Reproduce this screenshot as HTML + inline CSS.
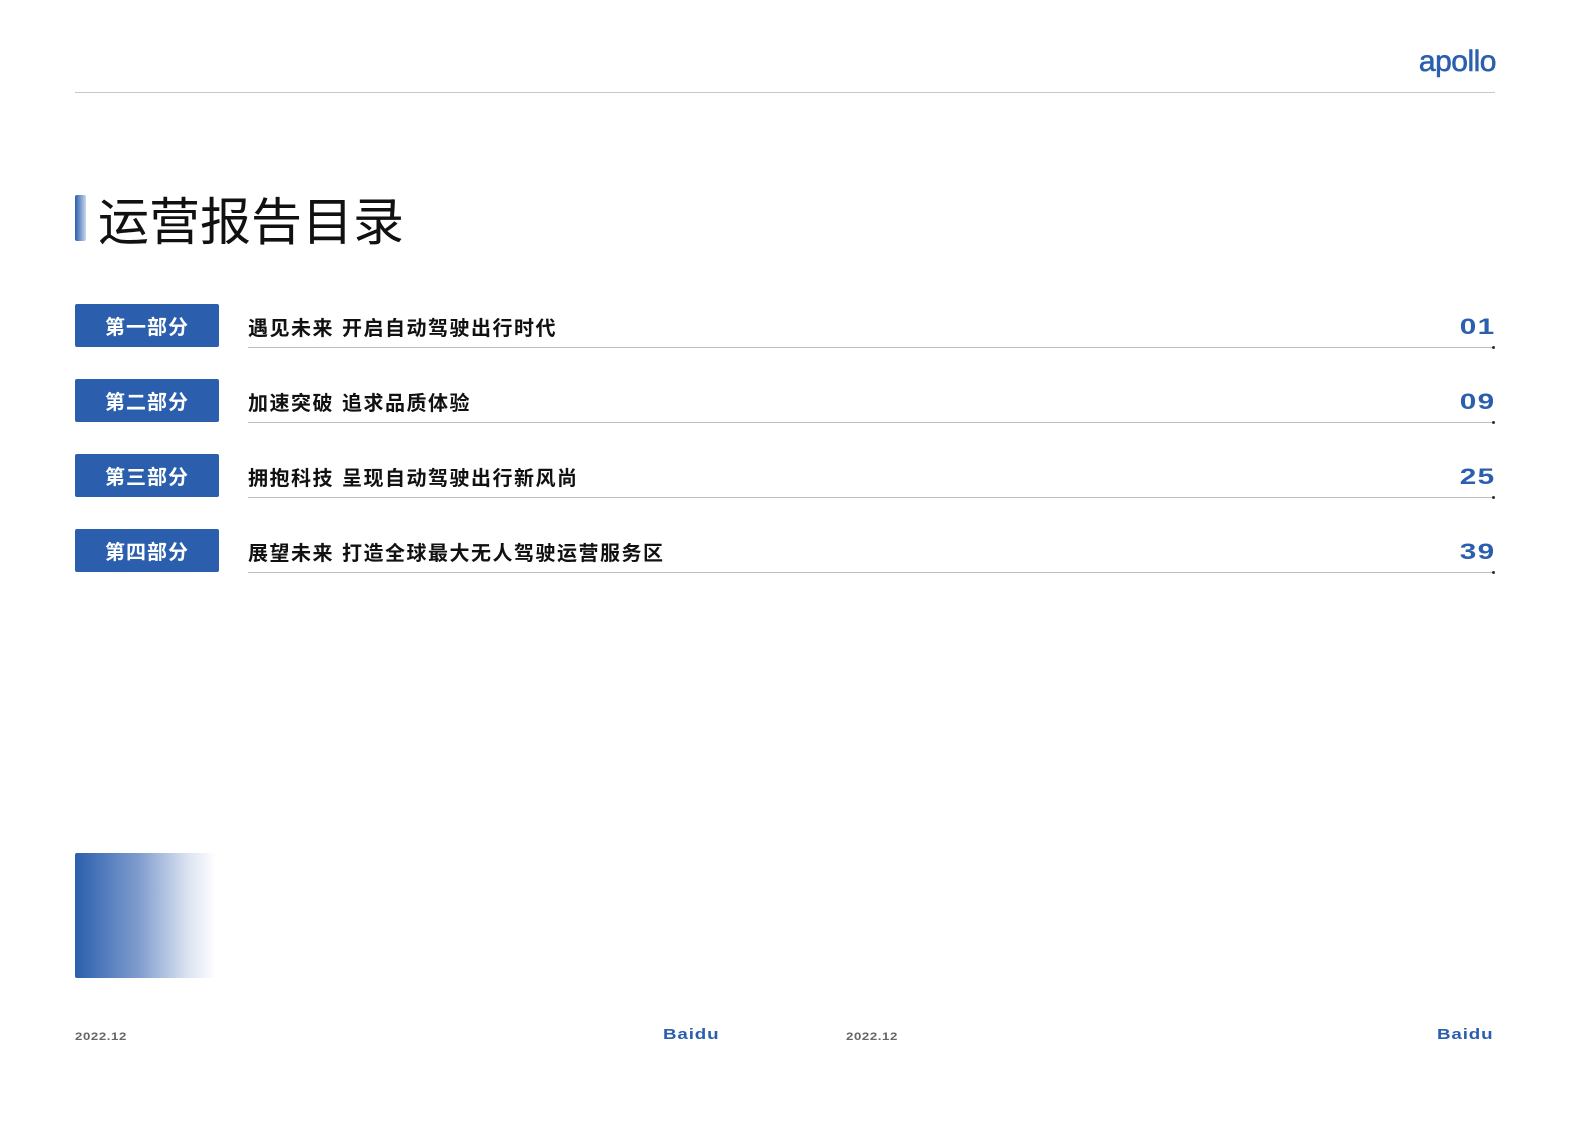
<!DOCTYPE html>
<html><head><meta charset="utf-8"><style>
html,body{margin:0;padding:0;background:#fff;}
body{width:1587px;height:1129px;position:relative;overflow:hidden;font-family:"Liberation Sans","Noto Sans CJK SC",sans-serif;}
.abs{position:absolute;}
.logo{left:1400px;top:42px;width:96px;text-align:right;font-size:30px;color:#2b5fad;font-weight:normal;line-height:40px;letter-spacing:-0.5px;-webkit-text-stroke:0.6px #2b5fad;}
.topline{left:75px;top:92px;width:1420px;height:1px;background:#c8c8c8;}
.bar{left:75px;top:195px;width:11px;height:46px;border-radius:2px;background:linear-gradient(90deg,#2b5fad,#c9d6ec);}
.title{left:98px;top:188px;font-size:51px;line-height:60px;color:#111;font-family:"Noto Sans CJK SC",sans-serif;font-weight:400;}
.box{left:75px;width:144px;height:43px;background:#2b5fad;border-radius:2px;color:#fff;font-size:20px;font-weight:bold;text-align:center;line-height:43px;font-family:"Noto Sans CJK SC",sans-serif;letter-spacing:1px;}
.txt{left:248px;font-size:20px;font-weight:bold;color:#111;line-height:43px;font-family:"Noto Sans CJK SC",sans-serif;letter-spacing:1.5px;word-spacing:2px;}
.num{right:92px;font-size:22px;font-weight:bold;color:#2b5fad;line-height:43px;letter-spacing:1px;transform:scaleX(1.35);transform-origin:right;}
.line{left:248px;width:1247px;height:1px;background:#bdbdbd;}
.dot{left:1492px;width:3px;height:3px;background:#333;border-radius:50%;}
.grad{left:75px;top:853px;width:141px;height:125px;background:linear-gradient(90deg,#2b5fad 0%,#7f9cce 45%,#dbe3f1 80%,#fff 100%);border-radius:2px;}
.date{font-size:11px;color:#666;font-weight:bold;top:1031px;letter-spacing:0.5px;transform:scaleX(1.2);transform-origin:left;}
.baidu{font-size:15px;color:#2b5fad;font-weight:bold;top:1026px;letter-spacing:0.7px;transform:scaleX(1.25);transform-origin:left;}
</style></head><body>
<div class="abs logo">apollo</div>
<div class="abs topline"></div>
<div class="abs bar"></div>
<div class="abs title">运营报告目录</div>

<div class="abs box" style="top:304px">第一部分</div>
<div class="abs txt" style="top:305px">遇见未来 开启自动驾驶出行时代</div>
<div class="abs num" style="top:305px">01</div>
<div class="abs line" style="top:347px"></div>
<div class="abs dot" style="top:346px"></div>

<div class="abs box" style="top:379px">第二部分</div>
<div class="abs txt" style="top:380px">加速突破 追求品质体验</div>
<div class="abs num" style="top:380px">09</div>
<div class="abs line" style="top:422px"></div>
<div class="abs dot" style="top:421px"></div>

<div class="abs box" style="top:454px">第三部分</div>
<div class="abs txt" style="top:455px">拥抱科技 呈现自动驾驶出行新风尚</div>
<div class="abs num" style="top:455px">25</div>
<div class="abs line" style="top:497px"></div>
<div class="abs dot" style="top:496px"></div>

<div class="abs box" style="top:529px">第四部分</div>
<div class="abs txt" style="top:530px">展望未来 打造全球最大无人驾驶运营服务区</div>
<div class="abs num" style="top:530px">39</div>
<div class="abs line" style="top:572px"></div>
<div class="abs dot" style="top:571px"></div>

<div class="abs grad"></div>

<div class="abs date" style="left:75px">2022.12</div>
<div class="abs baidu" style="left:663px">Baidu</div>
<div class="abs date" style="left:846px">2022.12</div>
<div class="abs baidu" style="left:1437px">Baidu</div>
</body></html>
